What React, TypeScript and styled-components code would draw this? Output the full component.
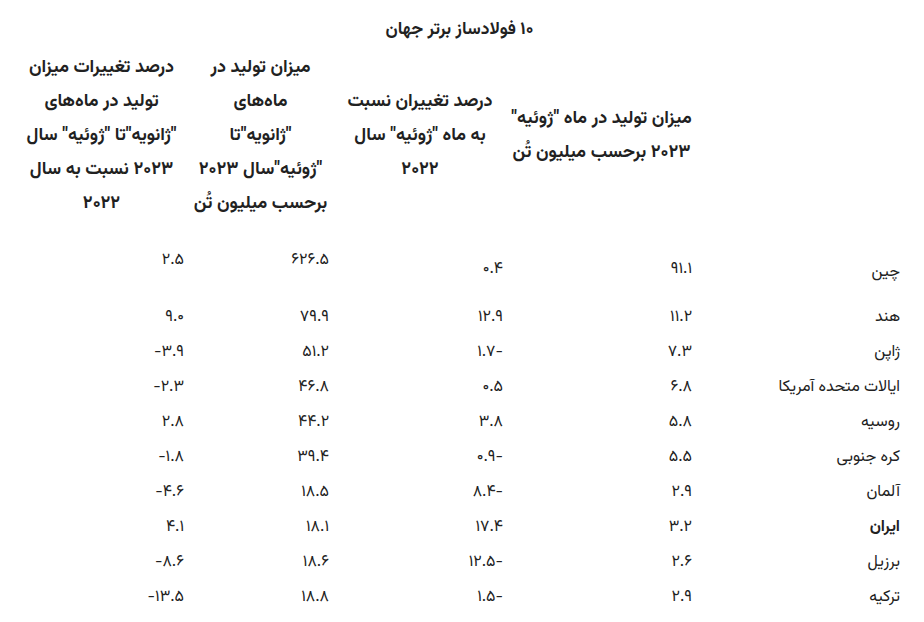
import React from "react";
import styled, { createGlobalStyle } from "styled-components";

const Global = createGlobalStyle`
  html, body { margin: 0; padding: 0; background: #ffffff; }
  body { font-family: "Vazirmatn", "DejaVu Sans", sans-serif; color: #212121; overflow: hidden; }
`;

const Page = styled.div`
  padding: 0 20px 0 15px;
`;

const Table = styled.table`
  direction: rtl;
  width: 889px;
  table-layout: fixed;
  border-collapse: collapse;
  font-size: 16px;
`;

const Caption = styled.caption`
  font-weight: 700;
  font-size: 17.5px;
  line-height: 24px;
  padding: 18px 0 9px;
  text-align: center;
`;

const HeadCell = styled.th`
  font-weight: 700;
  font-size: 18px;
  line-height: 34px;
  text-align: center;
  vertical-align: middle;
  padding: 0 4px;
  height: 170px;
  white-space: nowrap;
`;

const Row = styled.tr<{ $h: number }>`
  height: ${(p) => p.$h}px;
`;

const Cell = styled.td<{ $shift?: number; $bold?: boolean }>`
  text-align: right;
  vertical-align: middle;
  padding: ${(p) => (p.$shift ? `${p.$shift}px 4px 0` : "0 4px")};
  line-height: 24px;
  font-weight: ${(p) => (p.$bold ? 700 : 400)};
  white-space: nowrap;
`;

type R = [string, string, string, string, string, boolean?];

const rows: R[] = [
  ["چین", "۹۱.۱", "۰.۴", "۶۲۶.۵", "۲.۵"],
  ["هند", "۱۱.۲", "۱۲.۹", "۷۹.۹", "۹.۰"],
  ["ژاپن", "۷.۳", "-۱.۷", "۵۱.۲", "۳.۹-"],
  ["ایالات متحده آمریکا", "۶.۸", "۰.۵", "۴۶.۸", "۲.۳-"],
  ["روسیه", "۵.۸", "۳.۸", "۴۴.۲", "۲.۸"],
  ["کره جنوبی", "۵.۵", "-۰.۹", "۳۹.۴", "۱.۸-"],
  ["آلمان", "۲.۹", "-۸.۴", "۱۸.۵", "۴.۶-"],
  ["ایران", "۳.۲", "۱۷.۴", "۱۸.۱", "۴.۱", true],
  ["برزیل", "۲.۶", "-۱۲.۵", "۱۸.۶", "۸.۶-"],
  ["ترکیه", "۲.۹", "-۱.۵", "۱۸.۸", "۱۳.۵-"],
];

export default function App() {
  return (
    <Page>
      <Global />
      <Table>
        <Caption>۱۰ فولادساز برتر جهان</Caption>
        <colgroup>
          <col style={{ width: 208 }} />
          <col style={{ width: 189 }} />
          <col style={{ width: 174 }} />
          <col style={{ width: 145 }} />
          <col style={{ width: 173 }} />
        </colgroup>
        <thead>
          <tr>
            <HeadCell></HeadCell>
            <HeadCell>
              میزان تولید در ماه "ژوئیه"
              <br />
              ۲۰۲۳ برحسب میلیون تُن
            </HeadCell>
            <HeadCell>
              درصد تغییران نسبت
              <br />
              به ماه "ژوئیه" سال
              <br />
              ۲۰۲۲
            </HeadCell>
            <HeadCell>
              میزان تولید در
              <br />
              ماه‌های
              <br />
              "ژانویه"تا
              <br />
              "ژوئیه"سال ۲۰۲۳
              <br />
              برحسب میلیون تُن
            </HeadCell>
            <HeadCell>
              درصد تغییرات میزان
              <br />
              تولید در ماه‌های
              <br />
              "ژانویه"تا "ژوئیه" سال
              <br />
              ۲۰۲۳ نسبت به سال
              <br />
              ۲۰۲۲
            </HeadCell>
          </tr>
        </thead>
        <tbody>
          {rows.map((r, i) => (
            <Row key={r[0]} $h={i === 0 ? 79 : 35}>
              <Cell $shift={i === 0 ? 24 : 0} $bold={r[5]}>{r[0]}</Cell>
              <Cell $shift={i === 0 ? 18 : 0}>{r[1]}</Cell>
              <Cell $shift={i === 0 ? 18 : 0}>{r[2]}</Cell>
              <Cell>{r[3]}</Cell>
              <Cell>{r[4]}</Cell>
            </Row>
          ))}
        </tbody>
      </Table>
    </Page>
  );
}
